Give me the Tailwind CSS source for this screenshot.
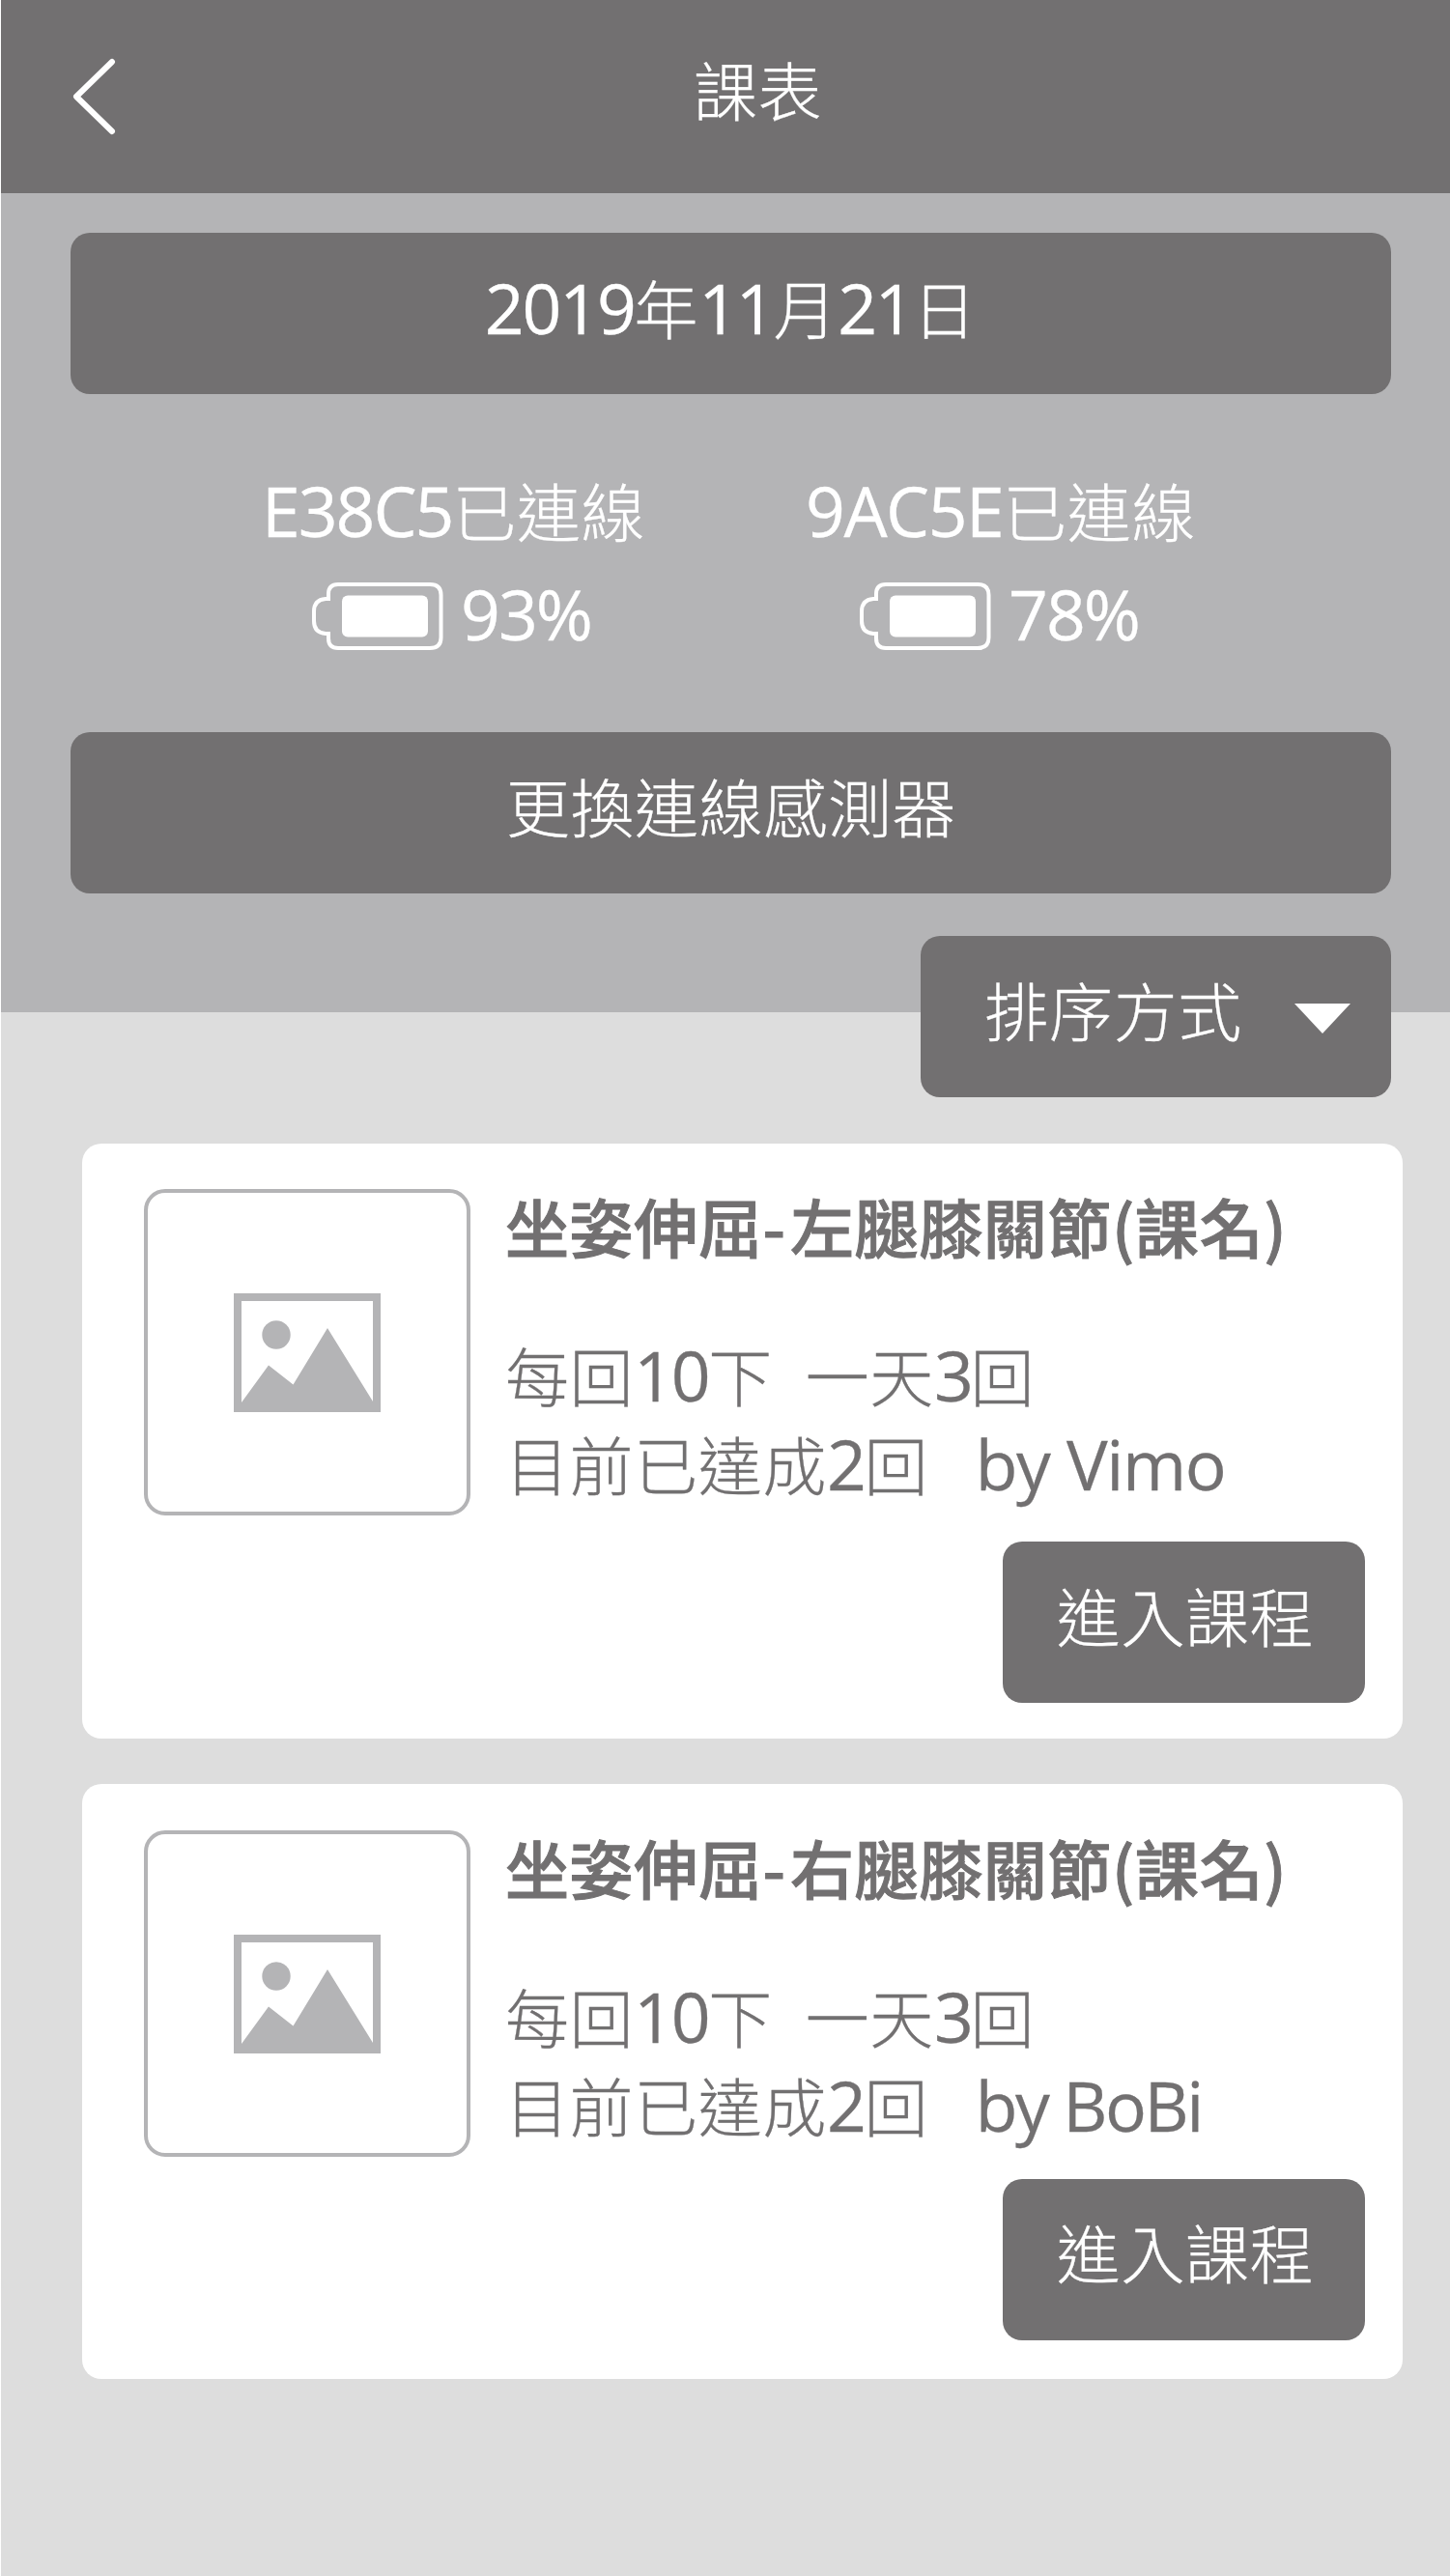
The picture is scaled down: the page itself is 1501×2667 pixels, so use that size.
<!DOCTYPE html>
<html lang="zh-Hant">
<head>
<meta charset="utf-8">
<title>課表</title>
<script src="https://cdn.jsdelivr.net/npm/@tailwindcss/browser@4"></script>
</head>
<body class="bg-white">
<div class="ml-px h-[2667px] w-[1500px] overflow-hidden bg-[#dddddd] font-['Noto_Sans_CJK_TC',sans-serif] text-[66px] leading-[100px] font-light tracking-[0.6px] text-white [-webkit-text-stroke:0.3px]">
  <header class="flex h-[200px] items-start bg-[#727071]">
    <svg class="mt-[60px] ml-[72px] h-20 w-12" viewBox="0 0 48 80" fill="none" stroke="#fff" stroke-width="6" stroke-linecap="round" stroke-linejoin="round"><path d="M43 4 6 40l37 36"/></svg>
    <h1 class="mt-[41px] ml-[597px]">課表</h1>
  </header>

  <section class="h-[848px] bg-[#b4b4b6] pt-[41px] pl-[72px]">
    <div class="flex h-[167px] w-[1367px] justify-center rounded-[20px] bg-[#727071] pt-[26px]"><p><span class="font-['Open_Sans'] text-[71.500px] font-normal tracking-[-2.2px]">2019</span>年<span class="font-['Open_Sans'] text-[71.500px] font-normal tracking-[-2.2px]">11</span>月<span class="font-['Open_Sans'] text-[71.500px] font-normal tracking-[-2.2px]">21</span>日</p></div>
    <div class="flex h-[350px] pt-[69px] whitespace-nowrap">
      <div class="w-[560px]">
        <p class="ml-[198px] h-[109px]"><span class="font-['Open_Sans'] text-[71.500px] font-normal tracking-[-2px]">E38C5</span>已連線</p>
        <div class="flex items-start pl-[250px]">
          <svg class="mt-[17px] h-[70px] w-[136px]" viewBox="0 0 136 70"><path d="M27 2H122Q133.500 2 133.500 13V57Q133.500 68 122 68H27Q17 68 17 58V53H14Q2 52 2 40V30Q2 18 14 17H17V12Q17 2 27 2Z" fill="none" stroke="#fff" stroke-width="4"/><rect x="31" y="13.500" width="89" height="43" rx="6" fill="#fff"/></svg>
          <p class="ml-[18px] font-['Open_Sans'] text-[71.500px] font-normal tracking-[-2px]">93%</p>
        </div>
      </div>
      <div class="w-[560px]">
        <p class="ml-[201px] h-[109px]"><span class="font-['Open_Sans'] text-[71.500px] font-normal tracking-[-1.5px]">9AC5E</span>已連線</p>
        <div class="flex items-start pl-[257px]">
          <svg class="mt-[17px] h-[70px] w-[136px]" viewBox="0 0 136 70"><path d="M27 2H122Q133.500 2 133.500 13V57Q133.500 68 122 68H27Q17 68 17 58V53H14Q2 52 2 40V30Q2 18 14 17H17V12Q17 2 27 2Z" fill="none" stroke="#fff" stroke-width="4"/><rect x="31" y="13.500" width="89" height="43" rx="6" fill="#fff"/></svg>
          <p class="ml-[18px] font-['Open_Sans'] text-[71.500px] font-normal tracking-[-2px]">78%</p>
        </div>
      </div>
    </div>
    <button class="flex h-[167px] w-[1367px] justify-center rounded-[20px] bg-[#727071] pt-[25px] pl-px tracking-[0.6px]">更換連線感測器</button>
    <button class="mt-11 ml-[879.5px] flex h-[167px] w-[487.5px] items-start rounded-[20px] bg-[#727071] pt-[25px] pl-[67px] tracking-[0.6px]"><span>排序方式</span><svg class="mt-[45px] ml-[54px] h-[31px] w-[58px]" viewBox="0 0 58 31"><path d="M0 0H58L29 31Z" fill="#fff"/></svg></button>
  </section>

  <main class="flex flex-col gap-[47px] pt-[136px] pl-[84px] text-[#727071]">
    <article class="flex h-[616px] w-[1367px] gap-9 rounded-[20px] bg-white pt-[47px] pl-16">
      <div class="flex h-[338px] w-[338px] items-center justify-center rounded-[22px] border-4 border-[#b4b4b6]">
        <svg class="h-[123px] w-[152px]" viewBox="0 0 152 123"><path d="M4 4H148V119H4Z" fill="none" stroke="#b4b4b6" stroke-width="8"/><circle cx="44" cy="43" r="14.700" fill="#b4b4b6"/><path d="M8 113 36 74.500 61.500 94.500 97 36 144 112V119H8Z" fill="#b4b4b6"/></svg>
      </div>
      <div class="-mt-[13px]">
        <h2 class="h-[154px] font-medium whitespace-nowrap [-webkit-text-stroke:1px]">坐姿伸屈<span class="tracking-[5px]">-</span>左腿膝關節(課名)</h2>
        <p class="h-[92px] whitespace-pre">每回<span class="font-['Open_Sans'] text-[71.500px] font-normal tracking-[-2.4px]">10</span>下<span class="tracking-[2.4px]">  </span>一天<span class="font-['Open_Sans'] text-[71.500px] font-normal tracking-[-3.4px]">3</span>回</p>
        <p class="h-[132px] whitespace-pre">目前已達成<span class="font-['Open_Sans'] text-[71.500px] font-normal tracking-[-2.4px]">2</span>回<span class="tracking-[1.6px]">   </span><span class="font-['Open_Sans'] text-[71.500px] font-normal tracking-[-1.3px]">by Vimo</span></p>
        <button class="ml-[515px] flex h-[167px] w-[375px] justify-center rounded-[20px] bg-[#727071] pt-[25px] pl-[3px] tracking-[0.6px] text-white">進入課程</button>
      </div>
    </article>
    <article class="flex h-[616px] w-[1367px] gap-9 rounded-[20px] bg-white pt-12 pl-16">
      <div class="flex h-[338px] w-[338px] items-center justify-center rounded-[22px] border-4 border-[#b4b4b6]">
        <svg class="h-[123px] w-[152px]" viewBox="0 0 152 123"><path d="M4 4H148V119H4Z" fill="none" stroke="#b4b4b6" stroke-width="8"/><circle cx="44" cy="43" r="14.700" fill="#b4b4b6"/><path d="M8 113 36 74.500 61.500 94.500 97 36 144 112V119H8Z" fill="#b4b4b6"/></svg>
      </div>
      <div class="-mt-[13px]">
        <h2 class="h-[154px] font-medium whitespace-nowrap [-webkit-text-stroke:1px]">坐姿伸屈<span class="tracking-[5px]">-</span>右腿膝關節(課名)</h2>
        <p class="h-[92px] whitespace-pre">每回<span class="font-['Open_Sans'] text-[71.500px] font-normal tracking-[-2.4px]">10</span>下<span class="tracking-[2.4px]">  </span>一天<span class="font-['Open_Sans'] text-[71.500px] font-normal tracking-[-3.4px]">3</span>回</p>
        <p class="h-[128px] whitespace-pre">目前已達成<span class="font-['Open_Sans'] text-[71.500px] font-normal tracking-[-2.4px]">2</span>回<span class="tracking-[1.6px]">   </span><span class="font-['Open_Sans'] text-[71.500px] font-normal tracking-[-2.5px]">by BoBi</span></p>
        <button class="ml-[515px] flex h-[167px] w-[375px] justify-center rounded-[20px] bg-[#727071] pt-6 pl-[3px] tracking-[0.6px] text-white">進入課程</button>
      </div>
    </article>
  </main>
</div>
</body>
</html>
